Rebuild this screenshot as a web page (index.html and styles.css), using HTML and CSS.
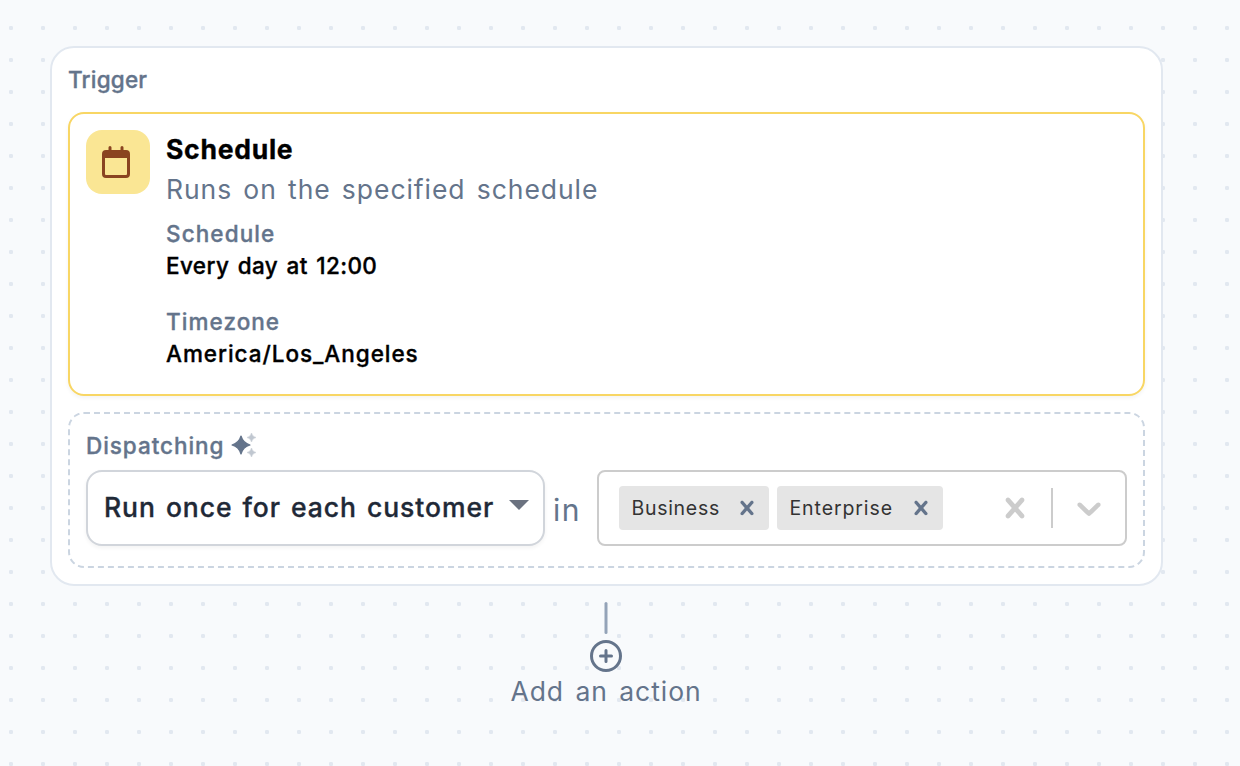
FILE: index.html
```html
<!DOCTYPE html>
<html lang="en">
<head>
<meta charset="utf-8">
<title>Workflow</title>
<link rel="stylesheet" href="styles.css">
</head>
<body>
<main class="canvas">
  <section class="card">
    <h2 class="label card-title"><span class="t-trigger">Trigger</span></h2>
    <div class="trigger">
      <div class="trigger-icon">
        <svg width="28" height="32" viewBox="0 0 28 32"><path fill="#8a4420" fill-rule="evenodd" d="M8 0a1.500 1.500 0 0 1 1.500 1.500V4h9V1.500a1.500 1.500 0 0 1 3 0V4H24a4 4 0 0 1 4 4v20a4 4 0 0 1-4 4H4a4 4 0 0 1-4-4V8a4 4 0 0 1 4-4h2.500V1.500A1.500 1.500 0 0 1 8 0zM3 12v16a1 1 0 0 0 1 1h20a1 1 0 0 0 1-1V12z"/></svg>
      </div>
      <div class="trigger-body">
        <div class="name"><span class="t-name">Schedule</span></div>
        <div class="desc"><span class="t-desc">Runs on the specified schedule</span></div>
        <dl class="fields">
          <div><dt class="label"><span class="t-sched">Schedule</span></dt><dd><span class="t-every">Every day at 12:00</span></dd></div>
          <div><dt class="label"><span class="t-tz">Timezone</span></dt><dd><span class="t-la">America/Los_Angeles</span></dd></div>
        </dl>
      </div>
    </div>
    <div class="dispatch">
      <div class="label dispatch-head"><span class="t-disp">Dispatching</span>
        <svg class="sparkles" width="26" height="26" viewBox="0 0 26 26" fill="#64748b"><path d="M10 4Q12 11 19 13Q12 15 10 22Q8 15 1 13Q8 11 10 4Z" stroke="#64748b" stroke-width="1.200" stroke-linejoin="round"/><path opacity=".4" stroke="#64748b" stroke-width=".5" stroke-linejoin="round" d="M20.500 1Q21.300 4.700 25 5.500Q21.300 6.300 20.500 10Q19.700 6.300 16 5.500Q19.700 4.700 20.500 1ZM20.500 16Q21.300 19.700 25 20.500Q21.300 21.300 20.500 25Q19.700 21.300 16 20.500Q19.700 19.700 20.500 16Z"/></svg>
      </div>
      <div class="dispatch-row">
        <button class="mode"><span class="t-run">Run once for each customer</span><svg class="caret" width="20" height="10" viewBox="0 0 20 10"><path fill="#6b7280" d="M0 0h20L10 10z"/></svg></button>
        <span class="in">in</span>
        <div class="multi">
          <div class="tags">
            <span class="tag tag-business"><span class="t-bus">Business</span><svg width="28" height="28" viewBox="0 0 20 20" fill="#64748b"><use href="#cross"/></svg></span>
            <span class="tag tag-enterprise"><span class="t-ent">Enterprise</span><svg width="28" height="28" viewBox="0 0 20 20" fill="#64748b"><use href="#cross"/></svg></span>
          </div>
          <svg class="clear" width="40" height="40" viewBox="0 0 20 20" fill="#ccc"><path id="cross" d="M14.348 14.849c-0.469 0.469-1.229 0.469-1.697 0l-2.651-3.030-2.651 3.029c-0.469 0.469-1.229 0.469-1.697 0-0.469-0.469-0.469-1.229 0-1.697l2.758-3.150-2.759-3.152c-0.469-0.469-0.469-1.228 0-1.697s1.228-0.469 1.697 0l2.652 3.031 2.651-3.031c0.469-0.469 1.228-0.469 1.697 0s0.469 1.229 0 1.697l-2.758 3.152 2.758 3.150c0.469 0.469 0.469 1.229 0 1.698z"/></svg>
          <span class="separator"></span>
          <svg class="open" width="40" height="40" viewBox="0 0 20 20" fill="#ccc"><path d="M4.516 7.548c0.436-0.446 1.043-0.481 1.576 0l3.908 3.747 3.908-3.747c0.533-0.481 1.141-0.446 1.574 0 0.436 0.445 0.408 1.197 0 1.615-0.406 0.418-4.695 4.502-4.695 4.502-0.217 0.223-0.502 0.335-0.787 0.335s-0.570-0.112-0.789-0.335c0 0-4.287-4.084-4.695-4.502s-0.436-1.170 0-1.615z"/></svg>
        </div>
      </div>
    </div>
  </section>
  <div class="add">
    <svg width="4" height="32" viewBox="0 0 4 32"><path d="M2 1.500v29" stroke="#94a3b8" stroke-width="3" stroke-linecap="round"/></svg>
    <svg class="plus" width="32" height="32" viewBox="0 0 32 32" fill="none" stroke="#64748b" stroke-width="3" stroke-linecap="round"><circle cx="16" cy="16" r="14.500"/><path d="M16 10.500v11M10.500 16h11"/></svg>
    <span class="add-label"><span class="t-add">Add an action</span></span>
  </div>
</main>
</body>
</html>
```
FILE: styles.css
```css
* { box-sizing: border-box; }
body {
  margin: 0;
  font-family: Inter, "Liberation Sans", sans-serif;
  color: #000;
}
svg { display: block; flex: none; }
.canvas {
  width: 1240px;
  height: 766px;
  padding: 46px 0 0 50px;
  overflow: hidden;
  background: radial-gradient(circle, #e2e8f0 1.900px, rgba(226, 232, 240, 0) 2.500px) -5px 12px / 32px 32px #f8fafc;
}
.card {
  width: 1113px;
  height: 540px;
  padding: 16px;
  border: 2px solid #e2e8f0;
  border-radius: 24px;
  background: #fff;
}
.label {
  margin: 0;
  font-size: 22.500px;
  font-weight: 500;
  line-height: 32px;
  color: #64748b;
  white-space: nowrap;
}
.label,
.fields dd,
.mode,
.name { -webkit-text-stroke: .35px currentColor; }
.card-title { margin-bottom: 16px; }
.trigger {
  display: flex;
  gap: 16px;
  height: 284px;
  padding: 16px;
  border: 2px solid #f8d664;
  border-radius: 16px;
  box-shadow: 0 2px 4px rgba(0, 0, 0, .05);
}
.trigger-icon {
  display: flex;
  flex: none;
  align-items: center;
  justify-content: center;
  width: 64px;
  height: 64px;
  padding-right: 4px;
  border-radius: 16px;
  background: #fae694;
}
.name,
.desc {
  height: 40px;
  font-size: 26.500px;
  line-height: 38px;
}
.name { font-weight: 680; }
.desc { color: #64748b; }
.fields {
  display: flex;
  flex-direction: column;
  gap: 24px;
  margin: 8px 0 0;
}
.fields dd { margin: 0; font-size: 22.500px; font-weight: 500; line-height: 32px; }
.dispatch {
  height: 156px;
  margin-top: 16px;
  padding: 16px;
  border: 2px dashed #cbd5e1;
  border-radius: 16px;
}
.dispatch-head { display: flex; align-items: center; }
.dispatch-head .t-disp { width: 145px; }
.sparkles { margin-top: -2px; }
.dispatch-row { display: flex; align-items: center; margin-top: 8px; }
.mode {
  display: flex;
  align-items: center;
  justify-content: space-between;
  width: 459px;
  height: 76px;
  padding: 0 14px 0 16px;
  border: 2px solid #d1d5db;
  border-radius: 16px;
  background: #fff;
  box-shadow: 0 2px 4px rgba(0, 0, 0, .05);
  font: 500 26.500px/40px Inter, "Liberation Sans", sans-serif;
  color: #1f2937;
  white-space: nowrap;
}
.mode .t-run { padding-bottom: 2px; }
.caret { margin-bottom: 7px; }
.in {
  width: 52px;
  padding: 4px 0 0 8px;
  font-size: 30px;
  letter-spacing: 1.500px;
  line-height: 40px;
  color: #64748b;
}
.multi {
  display: flex;
  align-items: center;
  width: 530px;
  height: 76px;
  padding: 0 16px 0 20px;
  border: 2px solid #ccc;
  border-radius: 8px;
  background: #fff;
}
.tags { display: flex; flex: 1; gap: 8px; }
.tag {
  display: flex;
  align-items: center;
  justify-content: space-between;
  height: 44px;
  padding: 0 8px 0 12.500px;
  border-radius: 4px;
  background: #e5e5e5;
  font-size: 19.500px;
  color: #333;
}
.tag-business { width: 150px; }
.tag-enterprise { width: 166px; }
.separator { width: 2px; height: 40px; margin: 0 16px; background: #ccc; }
.add {
  display: flex;
  flex-direction: column;
  align-items: center;
  width: 1112px;
  margin-top: 16px;
}
.plus { margin-top: 6px; }
.add-label { font-size: 26.500px; line-height: 38px; color: #64748b; }

/* Tracking per text run */
.t-trigger { letter-spacing: .2px; }
.t-name { letter-spacing: .75px; }
.t-desc { letter-spacing: .95px; word-spacing: 2.800px; }
.t-sched { letter-spacing: 1.100px; }
.t-every { letter-spacing: .4px; word-spacing: 2px; }
.t-tz { letter-spacing: 1.050px; }
.t-la { letter-spacing: .95px; }
.t-disp { letter-spacing: .95px; }
.t-run { letter-spacing: .95px; word-spacing: 2px; }
.t-bus { letter-spacing: .7px; }
.t-ent { letter-spacing: .9px; }
.t-add { letter-spacing: .95px; word-spacing: 3px; }
```
